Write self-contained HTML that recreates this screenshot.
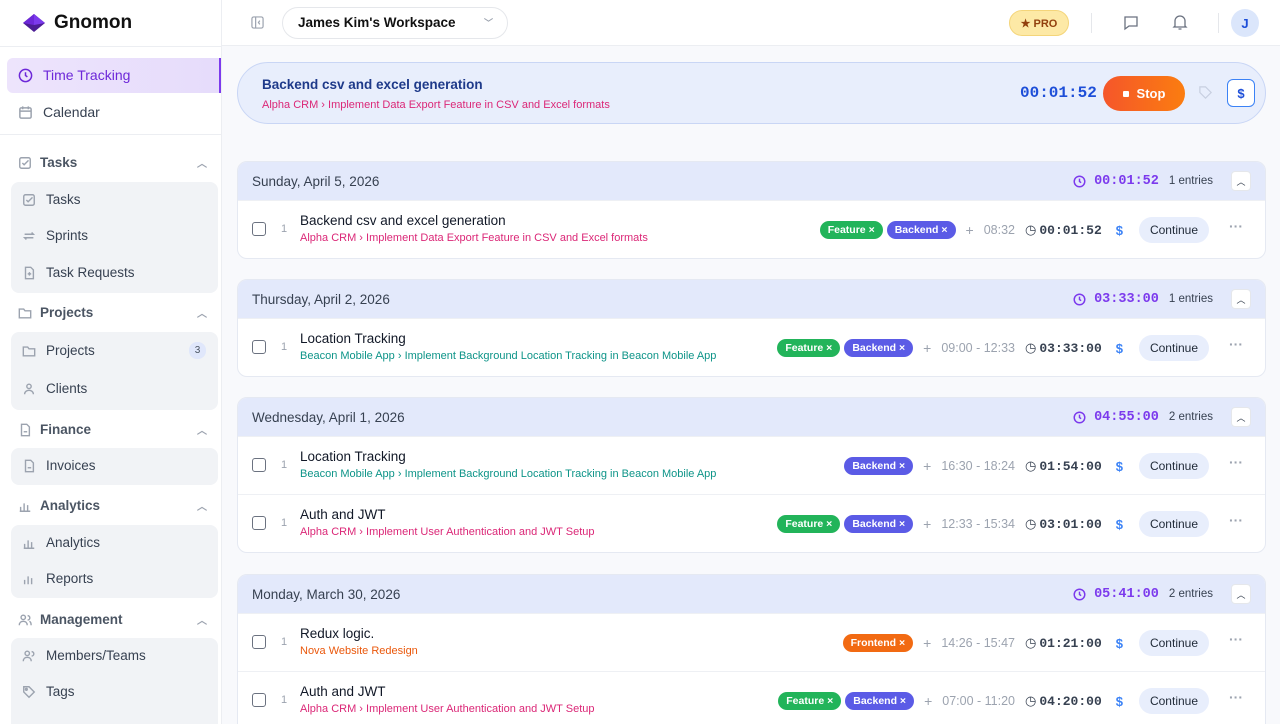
<!DOCTYPE html>
<html style="width:1280px;height:724px;overflow:hidden"><head><meta charset="utf-8"><style>
*{box-sizing:border-box;margin:0;padding:0}
body{width:1280px;height:724px;overflow:hidden;font-family:"Liberation Sans",sans-serif;background:#f8f9fc;position:relative;color:#1f2937}
.sb{position:absolute;left:0;top:0;width:222px;height:724px;background:#fff;border-right:1px solid #eceef2;overflow:hidden}
.logo{position:absolute;left:22px;top:12px;display:flex;align-items:center;gap:8px;font-weight:bold;font-size:19px;color:#111}
.top{position:absolute;left:222px;top:0;right:0;height:46px;background:#fff;border-bottom:1px solid #eceef2}
.ni{position:absolute;left:18px;font-size:14px;color:#374151;display:flex;align-items:center;gap:10px}
.ni svg{width:15px;height:15px;stroke:#9ca3af;fill:none;stroke-width:1.6}
.sec{position:absolute;left:18px;right:14px;font-size:13.5px;font-weight:bold;color:#4b5563;display:flex;align-items:center;gap:8px}
.sec .car{margin-left:auto;color:#9ca3af;font-size:10px}
.grp{position:absolute;left:11px;width:207px;background:#f1f3f6;border-radius:8px}
.sub{position:absolute;left:22px;font-size:13.5px;color:#374151;display:flex;align-items:center;gap:10px}
.sub svg,.sec svg{width:14px;height:14px;stroke:#9ca3af;fill:none;stroke-width:1.6}
.card{position:absolute;left:237px;width:1029px;background:#fff;border:1px solid #e5e9f2;border-radius:10px;overflow:hidden}
.dh{height:38px;background:#e3e9fb;display:flex;align-items:center;padding:0 14px;font-size:13.5px;color:#374151}
.dh .r{margin-left:auto;display:flex;align-items:center;gap:8px}
.mono{font-family:"Liberation Mono",monospace;font-weight:bold}
.dh .t{color:#7c3aed;font-size:13.5px}
.dh .e{font-size:11.5px;color:#374151;margin-left:2px}
.up{width:20px;height:20px;background:#fff;border:1px solid #e5e7eb;border-radius:4px;margin-left:10px;display:flex;align-items:center;justify-content:center;font-size:9px;color:#374151}
.row{height:58px;position:relative;border-top:1px solid #eef0f4}
.row:first-of-type{border-top:none}
.cb{position:absolute;left:14px;top:21px;width:14px;height:14px;border:1.5px solid #6b7280;border-radius:3px}
.num{position:absolute;left:43px;top:22px;font-size:11px;color:#9ca3af}
.ti{position:absolute;left:62px;top:12px;font-size:13.5px;color:#111827}
.pa{position:absolute;left:62px;top:31px;font-size:11px}
.pink{color:#db2777}.teal{color:#0d9488}.org{color:#ea580c}
.rc{position:absolute;right:22px;top:16px;height:26px;display:flex;align-items:center}
.tag{height:18px;border-radius:9px;color:#fff;font-size:10.5px;font-weight:bold;padding:0 8px;display:flex;align-items:center;margin-left:4px}
.f{background:#22b45a}.b{background:#5b5be6}.fr{background:#f26a12}
.plus{color:#9ca3af;margin:0 10px 0 10px;font-size:14px}
.rng{color:#9ca3af;font-size:12.5px;margin-right:10px}
.dur{font-size:13px;color:#374151;display:flex;align-items:center;gap:3px}
.dol{color:#3b82f6;font-weight:bold;font-size:13px;margin:0 16px 0 14px}
.cont{width:70px;height:26px;border-radius:13px;background:#e8eefc;font-size:12px;color:#1f2937;display:flex;align-items:center;justify-content:center}
.dots{color:#9ca3af;margin-left:20px;font-size:14px;font-weight:bold;letter-spacing:0;position:relative;top:-4px}
</style></head><body>
<div class="sb">
 <div class="logo"><svg width="24" height="20" viewBox="0 0 24 20"><path d="M12 1 L23 10 L12 19 L1 10Z" fill="#4c1d95"/><path d="M12 1 L23 10 L12 12 Z" fill="#7c3aed"/><path d="M12 1 L1 10 L12 12Z" fill="#6d28d9"/></svg>Gnomon</div>
 <div style="position:absolute;left:0;top:46px;width:222px;border-top:1px solid #eceef2"></div>
 <div style="position:absolute;left:7px;top:58px;width:215px;height:35px;background:linear-gradient(90deg,#ede4fc,#e6dcfb);border-radius:6px 0 0 6px;border-right:3px solid #7c3aed"></div>
 <div class="ni" style="top:67px;color:#6d28d9"><svg viewBox="0 0 16 16" style="stroke:#6d28d9"><circle cx="8" cy="8" r="6.5"/><path d="M8 4.5V8l2 1.5"/></svg>Time Tracking</div>
 <div class="ni" style="top:104px"><svg viewBox="0 0 16 16"><rect x="2" y="3" width="12" height="11" rx="1.5"/><path d="M2 6.5h12M5 1.5v3M11 1.5v3"/></svg>Calendar</div>
 <div style="position:absolute;left:0;top:134px;width:222px;border-top:1px solid #eceef2"></div>
 <div class="sec" style="top:155px"><svg viewBox="0 0 16 16"><rect x="2" y="2" width="12" height="12" rx="2"/><path d="M5 8l2 2 5-5"/></svg>Tasks<span class="car">︿</span></div>
 <div class="grp" style="top:182px;height:111px"></div>
 <div class="sub" style="top:192px"><svg viewBox="0 0 16 16"><rect x="2" y="2" width="12" height="12" rx="2"/><path d="M5 8l2 2 5-5"/></svg>Tasks</div>
 <div class="sub" style="top:228px"><svg viewBox="0 0 16 16"><path d="M3 6h10l-2-2M13 10H3l2 2"/></svg>Sprints</div>
 <div class="sub" style="top:265px"><svg viewBox="0 0 16 16"><path d="M4 1.5h6l3 3v10H4z"/><path d="M8.5 7v4M6.5 9h4"/></svg>Task Requests</div>
 <div class="sec" style="top:305px"><svg viewBox="0 0 16 16"><path d="M1.5 3.5h5l1.5 2h6.5v8h-13z"/></svg>Projects<span class="car">︿</span></div>
 <div class="grp" style="top:332px;height:78px"></div>
 <div class="sub" style="top:343px"><svg viewBox="0 0 16 16"><path d="M1.5 3.5h5l1.5 2h6.5v8h-13z"/></svg>Projects</div>
 <div style="position:absolute;left:189px;top:342px;width:17px;height:17px;border-radius:8px;background:#e0e7fb;font-size:10px;color:#4b5563;display:flex;align-items:center;justify-content:center">3</div>
 <div class="sub" style="top:381px"><svg viewBox="0 0 16 16"><circle cx="8" cy="5" r="2.5"/><path d="M3 14c0-3 2.5-4.5 5-4.5s5 1.5 5 4.5"/></svg>Clients</div>
 <div class="sec" style="top:422px"><svg viewBox="0 0 16 16"><path d="M4 1.5h6l3 3v10H4z"/><path d="M6.5 10h4"/></svg>Finance<span class="car">︿</span></div>
 <div class="grp" style="top:448px;height:37px"></div>
 <div class="sub" style="top:458px"><svg viewBox="0 0 16 16"><path d="M4 1.5h6l3 3v10H4z"/><path d="M6.5 10h4"/></svg>Invoices</div>
 <div class="sec" style="top:498px"><svg viewBox="0 0 16 16"><path d="M3 14V9M7 14V5M11 14V7M14 14H2"/></svg>Analytics<span class="car">︿</span></div>
 <div class="grp" style="top:525px;height:73px"></div>
 <div class="sub" style="top:535px"><svg viewBox="0 0 16 16"><path d="M3 14V9M7 14V5M11 14V7M14 14H2"/></svg>Analytics</div>
 <div class="sub" style="top:571px"><svg viewBox="0 0 16 16"><path d="M3 14V9M7 14V5M11 14V7"/></svg>Reports</div>
 <div class="sec" style="top:612px"><svg viewBox="0 0 16 16"><circle cx="6" cy="5" r="2.5"/><path d="M1.5 14c0-3 2-4.5 4.5-4.5s4.5 1.5 4.5 4.5M11 3a2.5 2.5 0 010 5M13 9.5c1.5.5 2 2 2 4.5"/></svg>Management<span class="car">︿</span></div>
 <div class="grp" style="top:638px;height:100px"></div>
 <div class="sub" style="top:648px"><svg viewBox="0 0 16 16"><circle cx="6" cy="5" r="2.5"/><path d="M1.5 14c0-3 2-4.5 4.5-4.5s4.5 1.5 4.5 4.5M11 3a2.5 2.5 0 010 5"/></svg>Members/Teams</div>
 <div class="sub" style="top:684px"><svg viewBox="0 0 16 16"><path d="M2 2h6l6 6-6 6-6-6z"/><circle cx="5" cy="5" r="1"/></svg>Tags</div>
</div>
<div class="top">
 <svg style="position:absolute;left:29px;top:16px" width="13" height="13" viewBox="0 0 14 14" fill="none" stroke="#9ca3af" stroke-width="1.3"><rect x="1" y="1" width="12" height="12" rx="2"/><path d="M5 1v12M9.5 5L8 7l1.5 2"/></svg>
 <div style="position:absolute;left:60px;top:7px;width:226px;height:32px;border:1px solid #e5e7eb;border-radius:16px;font-size:13.5px;font-weight:bold;color:#111;padding:7px 0 0 15px">James Kim's Workspace<span style="position:absolute;right:14px;top:8px;color:#9ca3af;font-size:9px">﹀</span></div>
 <div style="position:absolute;left:787px;top:10px;width:60px;height:26px;border-radius:13px;background:#fde9a6;border:1px solid #f4d57a;font-size:11px;font-weight:bold;color:#92400e;display:flex;align-items:center;justify-content:center">★ PRO</div>
 <div style="position:absolute;left:869px;top:13px;height:20px;border-left:1px solid #e5e7eb"></div>
 <svg style="position:absolute;left:901px;top:15px" width="16" height="16" viewBox="0 0 16 16" fill="none" stroke="#6b7280" stroke-width="1.3"><path d="M2 2h12v9H6l-4 3z"/></svg>
 <svg style="position:absolute;left:950px;top:14px" width="16" height="17" viewBox="0 0 16 17" fill="none" stroke="#6b7280" stroke-width="1.3"><path d="M3 12V7a5 5 0 0110 0v5l1 1H2zM6.5 15h3"/></svg>
 <div style="position:absolute;left:996px;top:13px;height:20px;border-left:1px solid #e5e7eb"></div>
 <div style="position:absolute;left:1009px;top:9px;width:28px;height:28px;border-radius:14px;background:#dbe6fb;color:#1d4ed8;font-weight:bold;font-size:13px;display:flex;align-items:center;justify-content:center">J</div>
</div>
<div style="position:absolute;left:237px;top:62px;width:1029px;height:62px;border-radius:31px;background:#e8eefc;border:1px solid #c9d6f5">
 <div style="position:absolute;left:24px;top:14px;font-size:13.5px;font-weight:bold;color:#1e3a8a">Backend csv and excel generation</div>
 <div style="position:absolute;left:24px;top:36px;font-size:11px;color:#db2777">Alpha CRM › Implement Data Export Feature in CSV and Excel formats</div>
 <div class="mono" style="position:absolute;left:782px;top:21px;font-size:16px;color:#1d4ed8">00:01:52</div>
 <div style="position:absolute;left:865px;top:13px;width:82px;height:35px;border-radius:18px;background:linear-gradient(90deg,#f5562a,#fb7d10);color:#fff;font-weight:bold;font-size:13px;display:flex;align-items:center;justify-content:center;gap:8px"><span style="width:6px;height:6px;background:#fff;border-radius:1px"></span>Stop</div>
 <svg style="position:absolute;left:960px;top:22px" width="15" height="15" viewBox="0 0 16 16" fill="none" stroke="#c7cfe0" stroke-width="1.3"><path d="M2 2h6l6 6-6 6-6-6z"/></svg>
 <div style="position:absolute;left:989px;top:16px;width:28px;height:28px;border:1.5px solid #3b82f6;border-radius:6px;background:#fff;color:#1d4ed8;font-weight:bold;font-size:13px;display:flex;align-items:center;justify-content:center">$</div>
</div>

<div class="card" style="top:161px">
 <div class="dh">Sunday, April 5, 2026<div class="r"><svg width="13" height="13" viewBox="0 0 16 16" fill="none" stroke="#7c3aed" stroke-width="1.8"><circle cx="8" cy="8" r="6.5"/><path d="M8 4.5V8l2 1.5"/></svg><span class="mono t">00:01:52</span><span class="e">1 entries</span><div class="up">︿</div></div></div>
 <div class="row"><div class="cb"></div><div class="num">1</div><div class="ti">Backend csv and excel generation</div><div class="pa pink">Alpha CRM › Implement Data Export Feature in CSV and Excel formats</div>
 <div class="rc"><span class="tag f">Feature ×</span><span class="tag b">Backend ×</span><span class="plus">+</span><span class="rng">08:32</span><span class="dur">◷<span class="mono">00:01:52</span></span><span class="dol">$</span><span class="cont">Continue</span><span class="dots">···</span></div></div>
</div>

<div class="card" style="top:279px">
 <div class="dh">Thursday, April 2, 2026<div class="r"><svg width="13" height="13" viewBox="0 0 16 16" fill="none" stroke="#7c3aed" stroke-width="1.8"><circle cx="8" cy="8" r="6.5"/><path d="M8 4.5V8l2 1.5"/></svg><span class="mono t">03:33:00</span><span class="e">1 entries</span><div class="up">︿</div></div></div>
 <div class="row"><div class="cb"></div><div class="num">1</div><div class="ti">Location Tracking</div><div class="pa teal">Beacon Mobile App › Implement Background Location Tracking in Beacon Mobile App</div>
 <div class="rc"><span class="tag f">Feature ×</span><span class="tag b">Backend ×</span><span class="plus">+</span><span class="rng">09:00 - 12:33</span><span class="dur">◷<span class="mono">03:33:00</span></span><span class="dol">$</span><span class="cont">Continue</span><span class="dots">···</span></div></div>
</div>

<div class="card" style="top:397px">
 <div class="dh">Wednesday, April 1, 2026<div class="r"><svg width="13" height="13" viewBox="0 0 16 16" fill="none" stroke="#7c3aed" stroke-width="1.8"><circle cx="8" cy="8" r="6.5"/><path d="M8 4.5V8l2 1.5"/></svg><span class="mono t">04:55:00</span><span class="e">2 entries</span><div class="up">︿</div></div></div>
 <div class="row"><div class="cb"></div><div class="num">1</div><div class="ti">Location Tracking</div><div class="pa teal">Beacon Mobile App › Implement Background Location Tracking in Beacon Mobile App</div>
 <div class="rc"><span class="tag b">Backend ×</span><span class="plus">+</span><span class="rng">16:30 - 18:24</span><span class="dur">◷<span class="mono">01:54:00</span></span><span class="dol">$</span><span class="cont">Continue</span><span class="dots">···</span></div></div>
 <div class="row"><div class="cb"></div><div class="num">1</div><div class="ti">Auth and JWT</div><div class="pa pink">Alpha CRM › Implement User Authentication and JWT Setup</div>
 <div class="rc"><span class="tag f">Feature ×</span><span class="tag b">Backend ×</span><span class="plus">+</span><span class="rng">12:33 - 15:34</span><span class="dur">◷<span class="mono">03:01:00</span></span><span class="dol">$</span><span class="cont">Continue</span><span class="dots">···</span></div></div>
</div>

<div class="card" style="top:574px;height:160px">
 <div class="dh">Monday, March 30, 2026<div class="r"><svg width="13" height="13" viewBox="0 0 16 16" fill="none" stroke="#7c3aed" stroke-width="1.8"><circle cx="8" cy="8" r="6.5"/><path d="M8 4.5V8l2 1.5"/></svg><span class="mono t">05:41:00</span><span class="e">2 entries</span><div class="up">︿</div></div></div>
 <div class="row"><div class="cb"></div><div class="num">1</div><div class="ti">Redux logic.</div><div class="pa org">Nova Website Redesign</div>
 <div class="rc"><span class="tag fr">Frontend ×</span><span class="plus">+</span><span class="rng">14:26 - 15:47</span><span class="dur">◷<span class="mono">01:21:00</span></span><span class="dol">$</span><span class="cont">Continue</span><span class="dots">···</span></div></div>
 <div class="row"><div class="cb"></div><div class="num">1</div><div class="ti">Auth and JWT</div><div class="pa pink">Alpha CRM › Implement User Authentication and JWT Setup</div>
 <div class="rc"><span class="tag f">Feature ×</span><span class="tag b">Backend ×</span><span class="plus">+</span><span class="rng">07:00 - 11:20</span><span class="dur">◷<span class="mono">04:20:00</span></span><span class="dol">$</span><span class="cont">Continue</span><span class="dots">···</span></div></div>
</div>
</body></html>
